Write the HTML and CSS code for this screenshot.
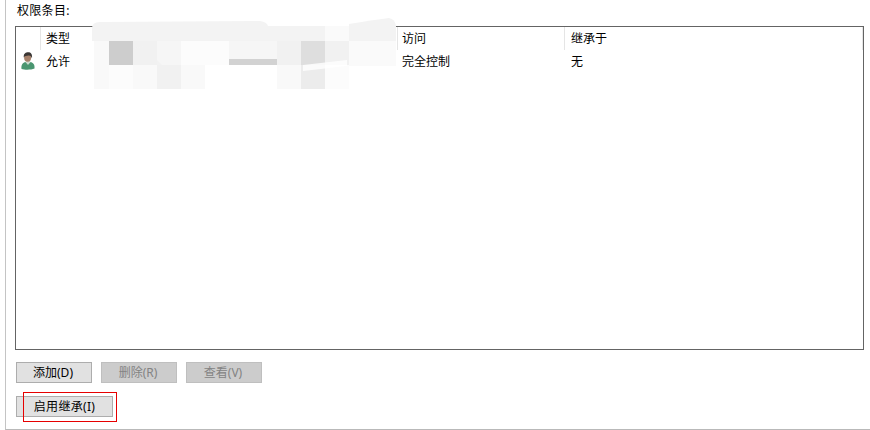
FILE: index.html
```html
<!DOCTYPE html>
<html lang="zh-CN">
<head>
    <meta charset="UTF-8">
    <meta name="viewport" content="width=device-width, initial-scale=1.0">
    <title>权限条目</title>
    <link rel="stylesheet" href="styles.css">
</head>
<body>
    <div class="panel">
        <div class="label">权限条目:</div>

        <div class="list">
            <div class="row head">
                <div class="col icon-col"></div>
                <div class="col type-col">类型</div>
                <div class="col access-col">访问</div>
                <div class="col inherit-col">继承于</div>
            </div>
            <div class="row item">
                <div class="col icon-col">
                    <svg class="user-icon" width="14" height="18" viewBox="0 0 14 18">
                        <path d="M0.5 17 C0 12.5 2 10.5 4.5 10 L7 12 L9.5 10 C12 10.5 14 12.5 13.5 16.5 C10 18 4 18 0.5 17 Z" fill="#4a9670"/>
                        <path d="M4.5 10 L7 13 L9.5 10 L8.5 8.5 H5.5 Z" fill="#c9d8cc"/>
                        <ellipse cx="6.6" cy="5.5" rx="3.5" ry="4.3" fill="#a5806a"/>
                        <path d="M2.8 5.5 C2.2 1.5 5 0.2 7.2 0.2 C9.8 0.2 11.6 2 11 6.5 C10.4 4.5 9.5 3.2 7.5 3.4 C5.5 3.6 3.6 3.6 2.8 5.5 Z" fill="#3a3634"/>
                    </svg>
                </div>
                <div class="col type-col">允许</div>
                <div class="col access-col">完全控制</div>
                <div class="col inherit-col">无</div>
            </div>
        </div>

        <div class="buttons">
            <button class="btn">添加(D)</button>
            <button class="btn" disabled>删除(R)</button>
            <button class="btn" disabled>查看(V)</button>
        </div>
        <div class="buttons second">
            <button class="btn wide">启用继承(I)</button>
        </div>
    </div>

    <!-- smeared out name column -->
    <div class="smear">
        <div class="mosaic">
            <i class="narrow t2"></i><i class="t7"></i><i class="t4"></i><i class="t3"></i><i class="t1"></i><i class="t1"></i><i class="t3 strip"></i><i class="t3 strip"></i><i class="t4"></i><i class="t6"></i><i class="t4"></i><i class="t1"></i>
            <i class="narrow t2"></i><i class="t1"></i><i class="t2"></i><i class="t4"></i><i class="t2"></i><i class="t0"></i><i class="t0"></i><i class="t0"></i><i class="t2"></i><i class="t5"></i><i class="t1"></i><i class="t0"></i>
        </div>
        <svg class="smear-strokes" width="304" height="72" viewBox="0 0 304 72">
            <path d="M0 10 Q0 4 8 4 L168 3 Q175 4 176 8 L233 8 V23 H0 Z" fill="#f3f3f3"/>
            <path d="M233 8 H257 V23 H233 Z" fill="#fafafa"/>
            <path d="M257 6 Q280 2 297 0 Q303 1 304 8 V23 H257 Z" fill="#f3f3f3"/>
            <path d="M257 23 H304 V48 H257 Z" fill="#fafafa"/>
            <path d="M41 31 L51 28 L70 47 H41 Z" fill="#f1f1f1" fill-opacity="0.8"/>
            <path d="M211 47 L255 42 V48 L211 53 Z" fill="#fff" fill-opacity="0.8"/>
        </svg>
    </div>

    <div class="highlight"></div>
</body>
</html>
```

FILE: styles.css
```css
html, body {
    margin: 0;
    height: 100%;
}

body {
    position: relative;
    width: 870px;
    height: 430px;
    overflow: hidden;
    background-color: #fff;
    color: #000;
    font-family: "Noto Sans", "Noto Sans CJK SC", sans-serif;
    font-size: 12px;
    line-height: 16px;
}

.panel {
    box-sizing: border-box;
    height: 430px;
    margin-left: 5px;
    padding: 3px 6px 0 9px;
    border-left: 1px solid #c4c4c4;
    border-bottom: 1px solid #b9b9b9;
}

.label {
    padding-left: 2px;
    letter-spacing: 0.3px;
}

.list {
    box-sizing: border-box;
    height: 324px;
    margin-top: 7px;
    background-color: #fff;
    border: 1px solid #646464;
}

.row {
    display: grid;
    grid-template-columns: 25px 357px 167px 1fr;
}

.head {
    height: 23px;
}

.head .col {
    height: 23px;
    line-height: 24px;
    border-right: 1px solid #e5e5e5;
}

.item {
    height: 22px;
    line-height: 24px;
}

.col {
    box-sizing: border-box;
    padding-left: 5px;
}

.access-col {
    padding-left: 4px;
}

.user-icon {
    display: block;
    margin-top: 2px;
}

.inherit-col {
    padding-left: 6px;
}

.buttons {
    display: flex;
    gap: 9px;
    margin-top: 12px;
    padding-left: 1px;
}

.second {
    margin-top: 13px;
}

.btn {
    box-sizing: border-box;
    width: 76px;
    height: 21px;
    padding: 0 2px 0 0;
    background-color: #e1e1e1;
    border: 1px solid #adadad;
    font: inherit;
    line-height: 17px;
    color: #000;
}

.btn:disabled {
    background-color: #cccccc;
    border-color: #bfbfbf;
    color: #838383;
}

.wide {
    width: 97px;
    padding: 0;
    letter-spacing: 0.3px;
}

/* overlays */
.smear {
    position: absolute;
    left: 92px;
    top: 18px;
    width: 304px;
    height: 72px;
}

.smear-strokes {
    position: absolute;
    left: 0;
    top: 0;
}

.mosaic {
    position: absolute;
    left: 2px;
    top: 23px;
    display: grid;
    grid-template-columns: 15px repeat(11, 24px);
    grid-auto-rows: 24px;
}

.mosaic i {
    display: block;
}

.t0 { background-color: #fff; }
.t1 { background-color: #fcfcfc; }
.t2 { background-color: #f9f9f9; }
.t3 { background-color: #f6f6f6; }
.t4 { background-color: #f1f1f1; }
.t5 { background-color: #ececec; }
.t6 { background-color: #dedede; }
.t7 { background-color: #cdcdcd; }

.mosaic .strip {
    border-bottom: 6px solid #d2d2d2;
}

.highlight {
    position: absolute;
    left: 23px;
    top: 392px;
    width: 92px;
    height: 28px;
    border: 1px solid #e60000;
}
```
